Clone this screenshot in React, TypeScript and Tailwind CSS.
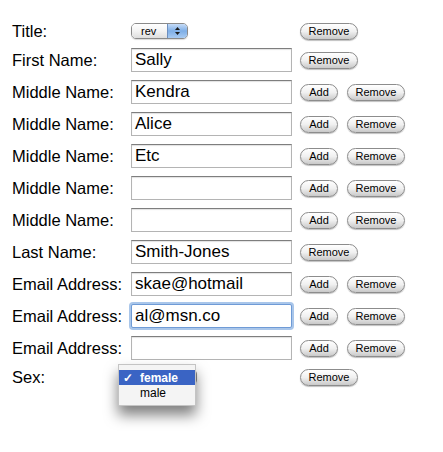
import React from "react";

const font = "font-['Liberation_Sans',Arial,sans-serif]";

function AquaButton({ label, w }: { label: string; w: string }) {
  return (
    <div
      className={`${w} h-[17px] shrink-0 rounded-full border border-[#8c8c8c] bg-gradient-to-b from-[#ffffff] via-[#f0f0f0] to-[#c9c9c9] shadow-[0_1px_1px_rgba(0,0,0,0.25)] flex items-center justify-center text-[11px] leading-none text-black`}
    >
      {label}
    </div>
  );
}

function TextBox({ value, focused }: { value: string; focused?: boolean }) {
  if (focused) {
    return (
      <div className="w-[161px] h-[24px] shrink-0 rounded-[2px] border border-[#6f9bd6] shadow-[0_0_0_2px_#a9c6ea] bg-white flex items-center pl-[3px] text-[17px] text-black">
        {value}
      </div>
    );
  }
  return (
    <div className="w-[161px] h-[24px] shrink-0 border border-[#b4b4b4] border-t-[#7e7e7e] shadow-[inset_0_1px_1px_rgba(0,0,0,0.12)] bg-white flex items-center pl-[3px] text-[17px] text-black">
      {value}
    </div>
  );
}

function SelectBox({ value, w }: { value: string; w: string }) {
  return (
    <div
      className={`${w} h-[16px] shrink-0 rounded-[5px] border border-[#8a8a8a] flex overflow-hidden shadow-[0_1px_1px_rgba(0,0,0,0.15)]`}
    >
      <div className="flex-1 bg-gradient-to-b from-white via-[#f3f3f3] to-[#dedede] flex items-center pl-[9px] text-[11px] leading-none text-black">
        {value}
      </div>
      <div className="w-[20px] bg-gradient-to-b from-[#c6dcf7] via-[#7eaee6] to-[#a9cbf2] border-l border-[#6d8fbf] flex flex-col items-center justify-center gap-[2px]">
        <svg width="5" height="3" viewBox="0 0 5 3">
          <path d="M0 3 L2.5 0 L5 3 Z" fill="#1b1b1b" />
        </svg>
        <svg width="5" height="3" viewBox="0 0 5 3">
          <path d="M0 0 L2.5 3 L5 0 Z" fill="#1b1b1b" />
        </svg>
      </div>
    </div>
  );
}

type Row = {
  label: string;
  value?: string;
  add?: boolean;
  focused?: boolean;
};

const rows: Row[] = [
  { label: "First Name:", value: "Sally" },
  { label: "Middle Name:", value: "Kendra", add: true },
  { label: "Middle Name:", value: "Alice", add: true },
  { label: "Middle Name:", value: "Etc", add: true },
  { label: "Middle Name:", value: "", add: true },
  { label: "Middle Name:", value: "", add: true },
  { label: "Last Name:", value: "Smith-Jones" },
  { label: "Email Address:", value: "skae@hotmail", add: true },
  { label: "Email Address:", value: "al@msn.co", add: true, focused: true },
  { label: "Email Address:", value: "", add: true },
];

function Buttons({ add }: { add?: boolean }) {
  return (
    <div className="flex items-center gap-[9px] ml-[8px]">
      {add && <AquaButton label="Add" w="w-[38px]" />}
      <AquaButton label="Remove" w="w-[58px]" />
    </div>
  );
}

export default function App() {
  return (
    <div className={`${font} w-[443px] h-[452px] bg-white pt-[22px] pl-[12px] text-[16.5px] text-black`}>
      <div className="flex flex-col gap-[8px]">
        <div className="flex items-center h-[18px]">
          <div className="w-[119px]">Title:</div>
          <div className="w-[161px] flex">
            <SelectBox value="rev" w="w-[57px]" />
          </div>
          <Buttons />
        </div>

        {rows.map((r, i) => (
          <div key={i} className="flex items-center h-[24px]">
            <div className="w-[119px] whitespace-nowrap">{r.label}</div>
            <TextBox value={r.value ?? ""} focused={r.focused} />
            <Buttons add={r.add} />
          </div>
        ))}

        <div className="flex items-center h-[18px]">
          <div className="w-[119px]">Sex:</div>
          <div className="w-[161px] flex relative">
            {/* the open menu covers the select's label */}
            <SelectBox value="" w="w-[66px]" />
            <div className="absolute left-[-13px] top-[-5px] w-[78px] bg-[#f4f4f4] border border-[#c4c4c4] py-[5px] shadow-[0_9px_14px_rgba(0,0,0,0.5)] text-[12px] leading-none">
              <div className="h-[15px] bg-[#3a64c4] text-white font-semibold flex items-center">
                <span className="w-[21px] pl-[4px] text-[12px]">✓</span>
                <span>female</span>
              </div>
              <div className="h-[15px] flex items-center text-black">
                <span className="w-[21px]" />
                <span>male</span>
              </div>
            </div>
          </div>
          <Buttons />
        </div>
      </div>
    </div>
  );
}
